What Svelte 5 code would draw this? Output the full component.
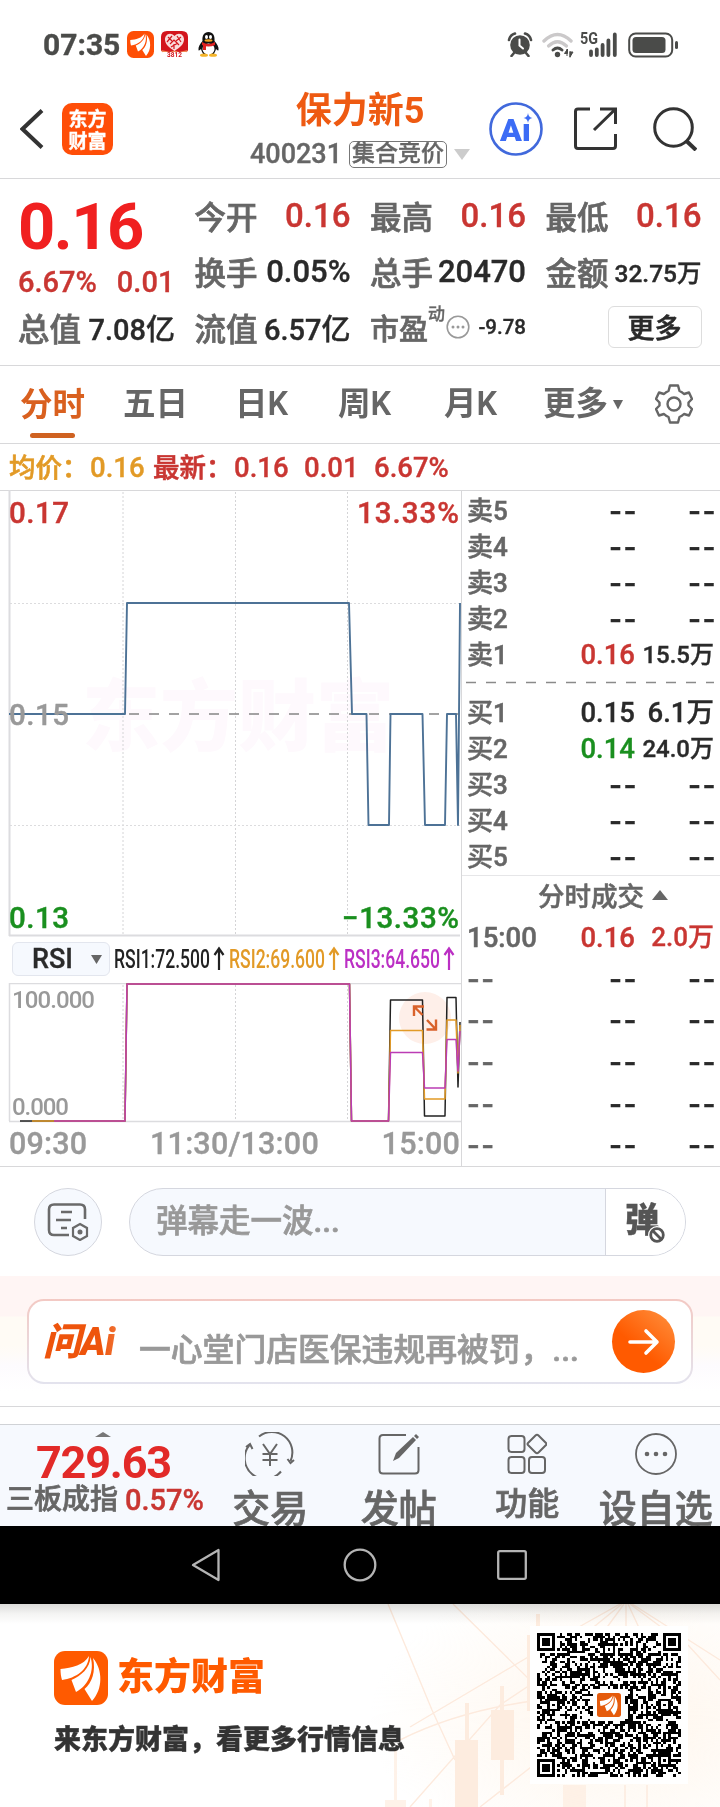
<script lang="ts">
  type Quote = { label: string; value: string; tone?: string; small?: boolean };

  // ── Quote header ──────────────────────────────────────────────────────

  const quotes: Quote[] = [
    { label: "今开", value: "0.16", tone: "up strong" },
    { label: "最高", value: "0.16", tone: "up strong" },
    { label: "最低", value: "0.16", tone: "up strong" },
    { label: "换手", value: "0.05%" },
    { label: "总手", value: "20470" },
    { label: "金额", value: "32.75万", small: true },
  ];

  const tabs = ["分时", "五日", "日K", "周K", "月K"];

  // ── Order book ────────────────────────────────────────────────────────

  const asks = [
    { label: "卖5", price: "--", vol: "--" },
    { label: "卖4", price: "--", vol: "--" },
    { label: "卖3", price: "--", vol: "--" },
    { label: "卖2", price: "--", vol: "--" },
    { label: "卖1", price: "0.16", vol: "15.5万", tone: "up" },
  ];
  const bids = [
    { label: "买1", price: "0.15", vol: "6.1万" },
    { label: "买2", price: "0.14", vol: "24.0万", tone: "down" },
    { label: "买3", price: "--", vol: "--" },
    { label: "买4", price: "--", vol: "--" },
    { label: "买5", price: "--", vol: "--" },
  ];

  // ── Chart data, in plot pixels ────────────────────────────────────────

  const gridX = [123, 235.5, 347.5];
  const pricePath =
    "M9 224H125L127 113H349L352 224H366.5L368.5 335H389L390.5 224H422.5L425 335H445L447 224H456L458 335L460 113";

  function rsiPath(start: number, a: number, b: number, c: number, d: number, e: number) {
    return `M${start} 138H125L127 1H349.5L351.5 138H388.5L390.5 ${a}H422.5L424.5 ${b}H445L447 ${c}H456L458 ${d}L460 ${e}`;
  }

  const rsi = [
    { color: "#222", d: rsiPath(20, 17, 133, 14.5, 104, 39) },
    { color: "#e29a26", d: rsiPath(32, 47.5, 116, 37, 90, 42) },
    { color: "#bb3cb4", d: rsiPath(54, 69.5, 105, 56.5, 88, 48) },
  ];

  // ── QR code ───────────────────────────────────────────────────────────

  const QR = 57;
  const finders = [[0, 0], [QR - 7, 0], [0, QR - 7]];
  const aligns = [[28, 6], [6, 28], [50, 28], [28, 50], [50, 50]];

  function ring(x: number, y: number, size: number) {
    const edge = x === 0 || y === 0 || x === size - 1 || y === size - 1;
    const core = x > 1 && y > 1 && x < size - 2 && y < size - 2;
    return edge || core;
  }

  function isDark(x: number, y: number, noise: number) {
    for (const [fx, fy] of finders) {
      if (x >= fx - 1 && x <= fx + 7 && y >= fy - 1 && y <= fy + 7) {
        const inside = x >= fx && x < fx + 7 && y >= fy && y < fy + 7;
        return inside && ring(x - fx, y - fy, 7);
      }
    }
    for (const [ax, ay] of aligns) {
      if (Math.abs(x - ax) <= 2 && Math.abs(y - ay) <= 2) return ring(x - ax + 2, y - ay + 2, 5);
    }
    if (Math.abs(x - 28) < 7 && Math.abs(y - 28) < 7) return false;
    return noise < 0.52;
  }

  function buildQr() {
    let seed = 20470;
    let d = "";
    for (let y = 0; y < QR; y++) {
      for (let x = 0; x < QR; x++) {
        seed = (seed * 1103515245 + 12345) % 2147483648;
        if (isDark(x, y, seed / 2147483648)) d += `M${x} ${y}h1v1h-1z`;
      }
    }
    return d;
  }

  const qrPath = buildQr();
</script>

{#snippet feathers()}
  <path d="M35 5C30 14 18 17 6.500 18C6.500 22 7 26 8 29C22 27 34 19 35 5Z" />
  <path d="M36.500 6C36 17 27 25 17.500 29L22 41C34 35 41 20 36.500 6Z" />
  <path d="M39 7C42 20 38 32 30.500 38L38 50C49 38 49 19 39 7Z" />
{/snippet}

{#snippet bookRow(row: { label: string; price: string; vol: string; tone?: string })}
  <div class="book-row">
    <span class="side">{row.label}</span>
    <span class="price {row.tone ?? ''}" class:dash={row.price === "--"}>{row.price}</span>
    <span class="vol" class:dash={row.vol === "--"} class:tight={row.vol.length > 4}>{row.vol}</span>
  </div>
{/snippet}

<div class="phone">
  <div class="status">
    <span class="clock">07:35</span>
    <svg class="s-app" viewBox="0 0 54 54" width="27" height="27">
      <rect width="54" height="54" rx="13" fill="#fe4e05" />
      <g fill="#fff">{@render feathers()}</g>
    </svg>
    <svg class="s-red" viewBox="0 0 27 27" width="27" height="27">
      <path d="M6 0H21Q27 0 27 6V20L13.500 25L0 20V6Q0 0 6 0Z" fill="#d3151d" />
      <path d="M0 19L9 21L13.500 19.500L18 21L27 19L25 21.500H2Z" fill="#f08a55" />
      <path d="M2 21H25V27H2Z" fill="#fff" />
      <path d="M13.500 5C9 0 3.500 4 4 9C4.500 14 9 17 13.500 20C18 17 22.500 14 23 9C23.500 4 18 0 13.500 5Z" fill="#f9dcdc" />
      <path d="M7 6L11 10M11 5L6 11M16 5L20 11M20 6L15 10M9 13L13 9L18 14M13 13V18M10 16L17 12" stroke="#d3151d" stroke-width="1.200" fill="none" />
      <text x="13.500" y="26" font-size="6.500" text-anchor="middle" class="promo">3812</text>
    </svg>
    <svg class="s-qq" viewBox="0 0 21 25" width="21" height="25">
      <path d="M10.500 0C6 0 4 3.500 4.500 9C2 12 0 15 .5 18C1 19.500 2 17.500 3 17C3.500 19.500 5 21 5 22H16C16 21 17.500 19.500 18 17C19 17.500 20 19.500 20.500 18C21 15 19 12 16.500 9C17 3.500 15 0 10.500 0Z" fill="#111" />
      <ellipse cx="10.500" cy="17" rx="6" ry="5.500" fill="#fff" />
      <path d="M4 10Q10.500 14 17 10V13Q10.500 16 4 13Z" fill="#e02222" />
      <path d="M5 12L8 14V18H5Z" fill="#e02222" />
      <ellipse cx="8.500" cy="5" rx="1.500" ry="2" fill="#fff" />
      <ellipse cx="12.500" cy="5" rx="1.500" ry="2" fill="#fff" />
      <ellipse cx="10.500" cy="8.500" rx="4" ry="1.200" fill="#f5a623" />
      <ellipse cx="6" cy="23.200" rx="4" ry="1.600" fill="#f5b52a" />
      <ellipse cx="15" cy="23.200" rx="4" ry="1.600" fill="#f5b52a" />
    </svg>
    <div class="s-right">
      <svg viewBox="0 0 26 25" width="26" height="25">
        <circle cx="13" cy="13" r="9.800" fill="#4a4b49" />
        <path d="M2 8Q3 3 8 1.500M24 8Q23 3 18 1.500M7 21L4.500 24M19 21L21.500 24" stroke="#4a4b49" stroke-width="2.600" fill="none" stroke-linecap="round" />
        <path d="M12.500 7.500V13.500L16 16.500" stroke="#fff" stroke-width="2" fill="none" stroke-linecap="round" />
      </svg>
      <svg class="wifi" viewBox="0 0 32 26" width="32" height="26" fill="none">
        <path d="M2 9Q15.500 -4 29 9" stroke="#cbc9ca" stroke-width="3.400" stroke-linecap="round" />
        <path d="M6.500 14Q15.500 5.500 24.500 14" stroke="#cbc9ca" stroke-width="3.200" stroke-linecap="round" />
        <path d="M11 18Q15.500 14 20 18" stroke="#4a4b49" stroke-width="3" stroke-linecap="round" />
        <circle cx="15.500" cy="22.500" r="2.700" fill="#4a4b49" />
        <path d="M25.500 17L22.500 21.500H25.500ZM25 17V24M28 19V25.500M28 25L31 20H28Z" fill="#4a4b49" stroke="#4a4b49" stroke-width="1" />
      </svg>
      <svg class="signal" viewBox="0 0 38 26" width="38" height="26">
        <text x="0" y="12" class="net" textLength="18" lengthAdjust="spacingAndGlyphs">5G</text>
        <path d="M11 23V19.500M16.800 23V17.500M22.600 23V13M28.400 23V8.500M34.800 23V2.500" stroke="#4a4b49" stroke-width="3.800" stroke-linecap="round" />
      </svg>
      <svg viewBox="0 0 51 26" width="51" height="26">
        <rect x="1.200" y="1.500" width="43" height="23" rx="6.500" fill="none" stroke="#4a4b49" stroke-width="2" />
        <rect x="4.500" y="5" width="33" height="16" rx="3.500" fill="#4a4b49" />
        <rect x="47" y="9" width="3" height="8" rx="1.500" fill="#4a4b49" />
      </svg>
    </div>
  </div>

  <header class="titlebar">
    <div class="left">
      <svg viewBox="0 0 24 40" width="24" height="40"><path d="M22 1.500L2.500 20L22 38.500" fill="none" stroke="#333" stroke-width="4" /></svg>
      <div class="badge"><span>东方</span><span>财富</span></div>
    </div>
    <div class="name">
      <h1>保力新5</h1>
      <div class="code">
        <span>400231</span><span class="tag">集合竞价</span>
        <svg viewBox="0 0 16 11" width="16" height="11"><path d="M0 0H16L8 11Z" fill="#ccc" /></svg>
      </div>
    </div>
    <div class="actions">
      <svg viewBox="0 0 54 54" width="54" height="54">
        <circle cx="27" cy="27" r="25.500" fill="none" stroke="#4169dc" stroke-width="2.600" />
        <text x="11" y="38.500" class="ai" textLength="31" lengthAdjust="spacingAndGlyphs">Aı</text>
        <path d="M39 11Q39.500 15.500 43.500 16Q39.500 16.500 39 21Q38.500 16.500 34.500 16Q38.500 15.500 39 11Z" fill="#3c6cf5" />
      </svg>
      <svg viewBox="0 0 43 43" width="43" height="43" fill="none" stroke="#333" stroke-width="3">
        <path d="M16 2H4Q1.500 2 1.500 4.500V39Q1.500 41.500 4 41.500H39Q41.500 41.500 41.500 39V27M26 2H41.500V17M41 2.500L20 23" />
      </svg>
      <svg viewBox="0 0 44 44" width="44" height="44" fill="none" stroke="#333" stroke-width="3">
        <circle cx="20.500" cy="20.500" r="18.800" /><path d="M33.500 34L43 43" stroke-width="4" />
      </svg>
    </div>
  </header>

  <section class="quote">
    <div class="last">
      <strong>0.16</strong>
      <div class="change"><span>6.67%</span><span>0.01</span></div>
    </div>
    {#each quotes as q}
      <div class="cell">
        <span class="label">{q.label}</span>
        <span class="value {q.tone ?? ''}" class:small={q.small}>{q.value}</span>
      </div>
    {/each}
    <div class="cell"><span class="label">总值</span><span class="value cap">7.08亿</span></div>
    <div class="cell"><span class="label">流值</span><span class="value cap">6.57亿</span></div>
    <div class="cell pe">
      <span class="label">市盈</span><sup>动</sup>
      <svg viewBox="0 0 24 24" width="24" height="24">
        <circle cx="12" cy="12" r="10.800" fill="none" stroke="#999" stroke-width="1.600" />
        <g fill="#999"><circle cx="7" cy="12" r="1.500" /><circle cx="12" cy="12" r="1.500" /><circle cx="17" cy="12" r="1.500" /></g>
      </svg>
      <span class="value tiny">-9.78</span>
    </div>
    <div class="cell end"><button class="more">更多</button></div>
  </section>

  <nav class="tabs">
    {#each tabs as tab, i}
      <span class="tab" class:active={i === 0}>{tab}</span>
    {/each}
    <span class="tab">更多<svg viewBox="0 0 10 10" width="10" height="10"><path d="M0 0H10L5 9.500Z" fill="#666" /></svg></span>
    <svg class="gear" viewBox="0 0 38 40" width="38" height="40" fill="none" stroke="#666" stroke-width="2.400" stroke-linejoin="round">
      <path d="M15 1.500H23L24.500 7Q27 8 29 10L34 8.500L37 15L33.500 18.500V21.500L37 25L34 31.500L29 30Q27 32 24.500 33L23 38.500H15L13.500 33Q11 32 9 30L4 31.500L1 25L4.500 21.500V18.500L1 15L4 8.500L9 10Q11 8 13.500 7Z" />
      <circle cx="19" cy="20" r="6.500" />
    </svg>
  </nav>

  <div class="avg">
    <span class="gold">均价：</span><span class="gold n1">0.16</span>
    <span class="n2">最新：</span><span class="n3">0.16</span><span class="n4">0.01</span><span class="n5">6.67%</span>
  </div>

  <main class="market">
    <div class="charts">
      <svg class="price-chart" viewBox="0 0 461 448" width="461" height="448" fill="none">
        <text x="82" y="255" class="watermark" textLength="312">东方财富</text>
        <path d="M9.500 0V446M9 445.500H460" stroke="#dcdcdf" stroke-width="2" />
        {#each gridX as x}
          <path d="M{x} 2V445" stroke="#d4d4d6" stroke-dasharray="2 2" />
        {/each}
        <path d="M10 113.500H460M10 335.500H460" stroke="#dcdcde" stroke-dasharray="2 2" />
        <path d="M129 224H460" stroke="#858585" stroke-width="1.600" stroke-dasharray="10 10" />
        <path d={pricePath} stroke="#4d7296" stroke-width="1.900" stroke-linejoin="round" />
        <g class="axis">
          <text x="9" y="32.500" textLength="60" fill="#c93632" stroke="#c93632">0.17</text>
          <text x="459" y="32.500" textLength="102" text-anchor="end" fill="#c93632" stroke="#c93632">13.33%</text>
          <text x="9" y="245" textLength="60" fill="#999" stroke="#999" dy="-10">0.15</text>
          <text x="9" y="438" textLength="60" fill="#1a8f1f" stroke="#1a8f1f">0.13</text>
          <text x="459" y="438" textLength="117" text-anchor="end" fill="#1a8f1f" stroke="#1a8f1f">−13.33%</text>
        </g>
      </svg>

      <div class="indicator">
        <div class="picker">RSI<svg viewBox="0 0 11 9" width="11" height="9"><path d="M0 0H11L5.500 9Z" fill="#666" /></svg></div>
        <svg viewBox="0 0 346 34" width="346" height="34" class="legend">
          <text x="0" y="25.500" textLength="96" lengthAdjust="spacingAndGlyphs" fill="#222">RSI1:72.500</text>
          <text x="115" y="25.500" textLength="96" lengthAdjust="spacingAndGlyphs" fill="#e29a26">RSI2:69.600</text>
          <text x="230" y="25.500" textLength="96" lengthAdjust="spacingAndGlyphs" fill="#bb2fc4">RSI3:64.650</text>
          <g fill="none" stroke-width="2.200">
            <path d="M105 28V7M100.500 13L105 6.500L109.500 13" stroke="#222" />
            <path d="M220 28V7M215.500 13L220 6.500L224.500 13" stroke="#e29a26" />
            <path d="M335 28V7M330.500 13L335 6.500L339.500 13" stroke="#bb2fc4" />
          </g>
        </svg>
      </div>

      <svg class="rsi-chart" viewBox="0 0 461 140" width="461" height="140" fill="none">
        <circle cx="425" cy="35" r="26" fill="#feefe9" />
        <path d="M9 .5H461M9.500 0V138M9 138.500H461" stroke="#dcdcdf" stroke-width="1.500" />
        {#each gridX as x}
          <path d="M{x} 2V138" stroke="#d4d4d6" stroke-dasharray="2 2" />
        {/each}
        {#each rsi as line}
          <path d={line.d} stroke={line.color} stroke-width="1.500" stroke-linejoin="round" />
        {/each}
        <g class="rsi-axis">
          <text x="12" y="25" textLength="83">100.000</text>
          <text x="12" y="131.500" textLength="57">0.000</text>
        </g>
        <g stroke="#d9622b" stroke-width="2.400">
          <path d="M414 33V23.500H424M414.500 24L422.500 32" />
          <path d="M436 36.500V46.500H426.500M427 37L435.500 46" />
        </g>
      </svg>

      <div class="times"><span>09:30</span><span>11:30/13:00</span><span>15:00</span></div>
    </div>

    <aside class="book">
      <div class="asks">{#each asks as row}{@render bookRow(row)}{/each}</div>
      <svg class="split" viewBox="0 0 258 22" width="258" height="22"><path d="M5 9.500H253" stroke="#8a8a8a" stroke-width="1.600" stroke-dasharray="10 10" /></svg>
      <div class="bids">{#each bids as row}{@render bookRow(row)}{/each}</div>
      <div class="deals-title">分时成交<svg viewBox="0 0 16 10" width="16" height="10"><path d="M8 0L16 10H0Z" fill="#666" /></svg></div>
      <div class="book-row deal first"><span class="side">15:00</span><span class="price up">0.16</span><span class="vol up">2.0万</span></div>
      {#each { length: 5 } as _}
        <div class="book-row deal"><span class="side dash">--</span><span class="price dash">--</span><span class="vol dash">--</span></div>
      {/each}
    </aside>
  </main>

  <section class="danmu">
    <div class="round">
      <svg viewBox="0 0 42 38" width="42" height="38" fill="none" stroke="#6a6a6a" stroke-width="2.600">
        <path d="M22 32H7Q2 32 2 27V6.500Q2 1.500 7 1.500H33Q38 1.500 38 6.500V16" />
        <path d="M14 9H25M9 17H24M14 25H20" />
        <path d="M33 21L40 25V33L33 37L26 33V25Z" stroke-width="2.200" /><circle cx="33" cy="29" r="1.200" />
      </svg>
    </div>
    <div class="pill">
      <span class="hint">弹幕走一波...</span>
      <div class="toggle">
        <span>弹</span>
        <svg class="ban" viewBox="0 0 18 18" width="18" height="18"><circle cx="9" cy="9" r="9" fill="#fff" /><circle cx="9" cy="9" r="6.300" fill="none" stroke="#555" stroke-width="2.800" /><path d="M5 5L13 13" stroke="#555" stroke-width="2.800" /></svg>
      </div>
    </div>
  </section>

  <section class="ask">
    <div class="ask-box">
      <span class="ask-logo">问Ai</span>
      <span class="question">一心堂门店医保违规再被罚，...</span>
      <div class="go"><svg viewBox="0 0 34 28" width="34" height="28" fill="none" stroke="#fff" stroke-width="3.600" stroke-linecap="round" stroke-linejoin="round"><path d="M3 14H30M19 3L30 14L19 25" /></svg></div>
    </div>
  </section>

  <footer class="dock">
    <div class="index">
      <svg viewBox="0 0 16 5" width="16" height="5"><path d="M8 0L16 5H0Z" fill="#777" /></svg>
      <strong>729.63</strong>
      <div><span>三板成指</span><em>0.57%</em></div>
    </div>
    <div class="item big">
      <svg viewBox="0 0 50 44" width="50" height="44" fill="none" stroke="#666" stroke-width="2">
        <path d="M14 4.500A20.500 20.500 0 0 1 45.500 29M36 39.500A20.500 20.500 0 0 1 4.500 13M1 15L5 12L7.500 17M42.500 27L45.500 31L49 28" />
        <path d="M18 12L25 22L32 12M25 22V34M17.500 22H32.500M17.500 28H32.500" />
      </svg>
      <span>交易</span>
    </div>
    <div class="item big">
      <svg viewBox="0 0 42 42" width="42" height="42" fill="none" stroke="#666" stroke-width="2">
        <path d="M28 2H5Q1.500 2 1.500 5.500V37Q1.500 40.500 5 40.500H37Q40.500 40.500 40.500 37V14" />
        <path d="M15 28L18 20L35 4L38 7L21 25Z" fill="#666" stroke="none" /><path d="M36 3L38 1L41 4L39 6Z" fill="#666" stroke="none" />
      </svg>
      <span>发帖</span>
    </div>
    <div class="item">
      <svg viewBox="0 0 40 40" width="40" height="40" fill="none" stroke="#666" stroke-width="2">
        <rect x="1.500" y="2" width="16" height="16" rx="3" /><rect x="1.500" y="23" width="16" height="16" rx="3" /><rect x="22" y="23" width="16" height="16" rx="3" />
        <path d="M28.500 1.500Q30 0 31.500 1.500L39 9Q40 10 39 11L31.500 18.500Q30 20 28.500 18.500L21 11Q20 10 21 9Z" />
      </svg>
      <span>功能</span>
    </div>
    <div class="item big">
      <svg viewBox="0 0 42 42" width="42" height="42"><circle cx="21" cy="21" r="20" fill="none" stroke="#666" stroke-width="1.800" /><g fill="#666"><circle cx="12" cy="21" r="2.300" /><circle cx="21" cy="21" r="2.300" /><circle cx="30" cy="21" r="2.300" /></g></svg>
      <span>设自选</span>
    </div>
  </footer>

  <div class="sysnav">
    <svg viewBox="0 0 30 34" width="30" height="34"><path d="M27.500 2V32L2 17Z" /></svg>
    <svg viewBox="0 0 34 34" width="34" height="34"><circle cx="17" cy="17" r="15.300" /></svg>
    <svg viewBox="0 0 30 30" width="30" height="30"><rect x="1.200" y="1.200" width="27.600" height="27.600" rx="1.500" /></svg>
  </div>

  <section class="brand">
    <svg class="deco" viewBox="370 1604 350 203" width="350" height="203" fill="none">
      <defs><radialGradient id="warm"><stop offset="0" stop-color="#fff6ec" /><stop offset="1" stop-color="#fff6ec" stop-opacity="0" /></radialGradient></defs>
      <ellipse cx="620" cy="1720" rx="250" ry="150" fill="url(#warm)" />
      <g stroke="#fdeadd" stroke-width="1.400">
        <path d="M453 1604L540 1690M388 1604L432 1710L455 1760M410 1727L540 1650M410 1807L500 1705L530 1685M480 1807L540 1760M400 1740Q460 1710 540 1700" />
        <path d="M620 1604L570 1632M622 1604L590 1630M624 1604L605 1630M626 1604V1630M628 1604L640 1630M630 1604L665 1630M632 1604L720 1660M688 1645L720 1680M625 1785V1807M647 1785V1807" />
      </g>
      <g fill="#fdecdf">
        <path d="M455 1740H478V1807H455ZM465 1703H469V1740H465ZM491 1710H514V1760H491ZM500 1686H504V1710H500ZM500 1760H504V1795H500ZM527 1635H530V1711H527ZM536 1614H540V1627H536Z" />
        <path d="M563 1785H586V1807H563ZM385 1800H406V1807H385ZM429 1799H432V1807H429ZM394 1750H397V1800H394Z" opacity=".7" />
      </g>
    </svg>
    <div class="brand-text">
      <div class="brand-name">
        <svg viewBox="0 0 54 54" width="54" height="54"><rect width="54" height="54" rx="11" fill="#ff5a00" /><g fill="#fff">{@render feathers()}</g></svg>
        <span>东方财富</span>
      </div>
      <p>来东方财富，看更多行情信息</p>
    </div>
    <div class="qr">
      <svg viewBox="0 0 57 57" width="144" height="144" shape-rendering="crispEdges"><path d={qrPath} fill="#000" /></svg>
      <svg class="qr-logo" viewBox="0 0 54 54" width="24" height="24"><rect width="54" height="54" rx="6" fill="#e55b0c" /><g fill="#fff">{@render feathers()}</g></svg>
    </div>
  </section>
</div>

<style>
  :global(body) {
    margin: 0;
    background: #fff;
  }

  .phone {
    width: 720px;
    height: 1807px;
    overflow: hidden;
    background: #fff;
    color: #2a2a2a;
    font-family: Roboto, "Noto Sans CJK SC", sans-serif;
    font-weight: 500;
    white-space: nowrap;
    -webkit-text-stroke-width: 0.35px;
  }

  .phone * {
    box-sizing: border-box;
  }

  svg {
    display: block;
    flex: none;
  }

  .up { color: #c93632; }
  .down { color: #1a8f1f; }

  /* status bar */
  .status {
    height: 89px;
    padding: 0 41px 0 43px;
    display: flex;
    align-items: center;
  }

  .clock {
    width: 84px;
    font-size: 30px;
    font-weight: 700;
    color: #4a4b49;
  }

  .s-app { margin-right: 7px; }
  .s-red { margin-right: 10px; }

  .promo {
    fill: #d3151d;
    font-weight: 700;
  }

  .s-right {
    margin-left: auto;
    display: flex;
    align-items: center;
  }

  .wifi { margin: 0 6px 0 9px; }
  .signal { overflow: visible; }
  .s-right svg:last-child { margin-left: 10px; }

  .net {
    font-size: 16px;
    font-weight: 700;
    fill: #4a4b49;
  }

  /* title bar */
  .titlebar {
    height: 90px;
    border-bottom: 1px solid #d8d8da;
    display: grid;
    grid-template-columns: 1fr auto 1fr;
  }

  .left {
    height: 79px;
    padding-left: 20px;
    display: flex;
    align-items: center;
    gap: 18px;
  }

  .badge {
    width: 51px;
    height: 52px;
    border-radius: 10px;
    background: #ff4e08;
    color: #fff;
    font: 700 19px/22px "Noto Sans CJK SC", sans-serif;
    display: flex;
    flex-direction: column;
    align-items: center;
    justify-content: center;
  }

  .name h1 {
    margin: 0;
    font-size: 36px;
    line-height: 45px;
    font-weight: 700;
    text-align: center;
    color: #ee5a12;
    -webkit-text-stroke-width: 0;
  }

  .code {
    height: 40px;
    display: flex;
    align-items: center;
    gap: 7px;
    font-size: 27px;
    color: #666;
  }

  .tag {
    height: 27px;
    padding: 0 2px;
    border: 1.5px solid #777;
    border-radius: 5px;
    font-size: 23px;
    line-height: 23px;
  }

  .actions {
    height: 79px;
    padding-right: 23px;
    display: flex;
    align-items: center;
    justify-content: flex-end;
  }

  .actions svg:nth-child(2) { margin: 0 36px 0 31px; }

  .ai {
    font-size: 32px;
    font-weight: 900;
    fill: #3c6cf5;
  }

  /* quote */
  .quote {
    height: 187px;
    padding: 8px 18px 0 18px;
    border-bottom: 1px solid #d8d8da;
    display: grid;
    grid-template-columns: 157px repeat(3, 156px);
    grid-template-rows: repeat(3, 56px);
    column-gap: 19.500px;
  }

  .last {
    grid-row: span 2;
    padding-top: 2px;
    color: #f02020;
  }

  .last strong {
    display: block;
    font-size: 65px;
    line-height: 76px;
    letter-spacing: -1.500px;
    -webkit-text-stroke-width: 0;
  }

  .change {
    display: flex;
    gap: 20px;
    font-size: 29px;
    line-height: 34px;
    color: #c93632;
  }

  .cell {
    display: flex;
    align-items: center;
    justify-content: space-between;
  }

  .label {
    font-size: 31.500px;
    color: #666;
    -webkit-text-stroke-width: 0.7px;
  }

  .value { font-size: 31px; }
  .value.strong { font-size: 33px; }
  .value.small { font-size: 24.500px; }
  .value.cap { font-size: 29px; }
  .value.tiny { font-size: 20.500px; margin-left: auto; }

  .pe sup {
    align-self: flex-start;
    margin-top: 3px;
    font-size: 17px;
    line-height: 24px;
    color: #666;
  }

  .pe .label { font-size: 29px; }
  .pe svg { margin-left: 1px; }

  .end { justify-content: flex-end; }

  .more {
    width: 94px;
    height: 42px;
    margin-bottom: 1px;
    padding: 0;
    border: 1px solid #ddd;
    border-radius: 6px;
    background: #fff;
    color: #2a2a2a;
    font: 500 27px/38px "Noto Sans CJK SC", sans-serif;
    -webkit-text-stroke-width: 0.6px;
  }

  /* tabs */
  .tabs {
    height: 78px;
    padding-left: 20px;
    border-bottom: 1px solid #d8d8da;
    display: grid;
    grid-template-columns: 103px 112px 103px 106px 99px 112px auto;
    align-items: start;
    -webkit-text-stroke-width: 0;
  }

  .tab {
    height: 77px;
    font-size: 32.500px;
    line-height: 79px;
    color: #666;
    font-weight: 600;
    display: flex;
    align-items: center;
    gap: 5px;
  }

  .tab.active {
    width: 65px;
    flex-direction: column;
    gap: 0;
    color: #d9601f;
    font-weight: 700;
  }

  .tab.active::after {
    content: "";
    width: 45px;
    height: 5px;
    margin-top: -12px;
    border-radius: 3px;
    background: #cf6221;
  }

  .gear { margin-top: 18px; }

  /* average line */
  .avg {
    height: 47px;
    padding-left: 9px;
    border-bottom: 1px solid #d8d8da;
    display: flex;
    font-size: 27.500px;
    line-height: 48px;
    color: #c93632;
  }

  .gold { color: #e29a26; width: 81px; }
  .gold.n1 { width: 63px; }
  .n2 { width: 81px; }
  .n3, .n4 { width: 70px; }

  .gold:not(.n1),
  .n2 {
    font-size: 26.500px;
    -webkit-text-stroke-width: 0.6px;
  }

  /* market */
  .market {
    height: 676px;
    border-bottom: 1px solid #d8d8da;
    display: flex;
  }

  .charts {
    width: 461px;
    margin-top: -1px;
  }

  .watermark {
    font-size: 78px;
    font-weight: 900;
    fill: #fef9fd;
  }

  .axis text {
    font-size: 29.500px;
    font-weight: 500;
    stroke-width: 0.4px;
  }

  .indicator {
    height: 45px;
    padding: 4px 0 0 12px;
    display: flex;
    gap: 4px;
  }

  .picker {
    width: 98px;
    height: 34px;
    padding: 0 7px 0 19px;
    border: 1px solid #e3e6ee;
    border-radius: 6px;
    background: #f6f9fe;
    display: flex;
    align-items: center;
    justify-content: space-between;
    font-size: 27px;
  }

  .legend text {
    font-size: 26px;
    font-weight: 500;
  }

  .rsi-axis text {
    font-size: 24px;
    fill: #999;
    font-weight: 500;
  }

  .times {
    height: 42px;
    padding: 0 1px 0 9px;
    display: flex;
    justify-content: space-between;
    font-size: 30.500px;
    line-height: 42px;
    letter-spacing: 0.2px;
    color: #999;
  }

  /* order book */
  .book {
    flex: 1;
    border-left: 1px solid #d8d8da;
  }

  .asks { padding-top: 2px; }
  .split { margin-left: -1px; }

  .bids {
    height: 180px;
  }

  .book-row {
    height: 36px;
    padding: 0 6px 0 5px;
    display: grid;
    grid-template-columns: 77px 91px 1fr;
    line-height: 36px;
    font-size: 27.500px;
  }

  .book-row span:not(.side) { text-align: right; }

  .side {
    font-size: 26px;
    color: #666;
    -webkit-text-stroke-width: 0.5px;
  }

  .book-row .tight { font-size: 24px; }

  .book-row .dash {
    font-family: Inter, sans-serif;
    font-size: 28px;
    font-weight: 600;
    letter-spacing: 1.500px;
  }

  .book-row .dash:not(.side) { margin-right: -3px; }

  .deals-title {
    height: 42px;
    border-top: 1px solid #e6e6e8;
    display: flex;
    align-items: center;
    justify-content: center;
    gap: 8px;
    padding: 0 0 4px 24px;
    font-size: 26.500px;
    color: #666;
    -webkit-text-stroke-width: 0.5px;
  }

  .deal {
    height: 41.700px;
    line-height: 41px;
  }

  .deal .side { font-size: 27.500px; }
  .deal .vol:not(.dash) { font-size: 26px; }

  .danmu {
    height: 109px;
    padding: 21px 34px 0 34px;
    display: flex;
    gap: 27px;
  }

  .round {
    width: 68px;
    height: 68px;
    border: 1px solid #d5d7df;
    border-radius: 50%;
    background: #f6f9fe;
    display: grid;
    place-items: center;
  }

  .pill {
    width: 557px;
    height: 68px;
    border: 1px solid #d5d7df;
    border-radius: 34px;
    overflow: hidden;
    background: #f6f9fe;
    display: flex;
    justify-content: space-between;
  }

  .hint {
    padding-left: 26px;
    font-size: 31.500px;
    line-height: 66px;
    color: #999;
    -webkit-text-stroke-width: 0.7px;
  }

  .toggle {
    position: relative;
    width: 80px;
    padding-left: 19px;
    border-left: 1px solid #d5d7df;
    background: #fff;
    font-size: 34px;
    line-height: 63px;
    font-weight: 900;
    color: #555;
  }

  .ban {
    position: absolute;
    left: 42px;
    top: 37px;
  }

  /* ask */
  .ask {
    height: 131px;
    padding: 23px 27px 0;
    border-bottom: 1px solid #d8d8da;
    background: linear-gradient(#fff5f4 0 40px, #fffbf5 41px 70px, #fdfbfe 90px, #fff 115px);
  }

  .ask-box {
    height: 85px;
    padding: 0 16px 0 14px;
    border: 2px solid transparent;
    border-radius: 17px;
    background:
      linear-gradient(#fff, #fff) padding-box,
      linear-gradient(#f3c9c3, #e3e3ee) border-box;
    display: flex;
    align-items: center;
  }

  .ask-logo {
    width: 96px;
    font-size: 38px;
    line-height: 40px;
    font-weight: 900;
    font-style: italic;
    letter-spacing: -0.500px;
    background: linear-gradient(90deg, #ee540c 60%, #f39a69);
    background-clip: text;
    -webkit-background-clip: text;
    -webkit-text-stroke-width: 0;
    color: transparent;
  }

  .question {
    padding-top: 16px;
    font-size: 31.800px;
    line-height: 40px;
    color: #999;
    -webkit-text-stroke-width: 0.7px;
  }

  .go {
    width: 63px;
    height: 63px;
    margin-left: auto;
    border-radius: 50%;
    background: linear-gradient(220deg, #ff9240, #ff5a00 60%);
    display: grid;
    place-items: center;
  }

  /* dock */
  .dock {
    height: 102px;
    margin-top: 17px;
    border-top: 1px solid #d0d2d6;
    background: #f6f9fe;
    overflow: hidden;
    display: grid;
    grid-template-columns: 206px repeat(4, 128.500px);
    color: #666;
    -webkit-text-stroke-width: 0.7px;
  }

  .index {
    padding-top: 7px;
  }

  .index svg { margin-left: 95px; }

  .index strong {
    display: block;
    padding-left: 36px;
    font-size: 45px;
    line-height: 51px;
    font-weight: 700;
    letter-spacing: -1.200px;
    color: #e22a28;
    -webkit-text-stroke-width: 0;
  }

  .index div {
    display: flex;
    gap: 7px;
    padding-left: 6px;
    margin-top: -2px;
    font-size: 28px;
    line-height: 28px;
  }

  .index em {
    font-style: normal;
    font-size: 29px;
    color: #c93632;
    -webkit-text-stroke-width: 0.4px;
  }

  .item {
    display: flex;
    flex-direction: column;
    align-items: center;
    height: 104px;
    padding-top: 7px;
    font-size: 32px;
  }

  .item svg { height: 44px; }

  .item span {
    margin-top: 6px;
    line-height: 44px;
  }

  .item.big span {
    font-size: 38px;
    margin-top: 11px;
  }

  .sysnav {
    height: 78px;
    background: #000;
    display: flex;
    align-items: center;
    justify-content: center;
    gap: 122px;
    padding-right: 2px;
    fill: none;
    stroke: #b4b4b4;
    stroke-width: 2.300px;
    stroke-linejoin: round;
  }

  .sysnav svg:last-child { margin-left: -2px; }

  .brand {
    position: relative;
    height: 203px;
    padding: 22px 32px 0 54px;
    background: linear-gradient(#dcdcda, #f4f4f3 10px, #fff 20px);
    display: flex;
    justify-content: space-between;
  }

  .deco {
    position: absolute;
    right: 0;
    top: 0;
    mix-blend-mode: multiply;
  }

  .brand-text { padding-top: 25px; }

  .brand-name {
    display: flex;
    align-items: center;
    gap: 9px;
    color: #ff5a00;
    font-size: 37px;
    font-weight: 900;
    line-height: 54px;
    -webkit-text-stroke-width: 0;
  }

  p {
    margin: 15px 0 0;
    font-size: 27px;
    line-height: 40px;
    font-weight: 900;
    color: #333;
  }

  .qr {
    position: relative;
    width: 158px;
    height: 158px;
    padding: 7px;
    background: #fff;
  }

  .qr-logo {
    position: absolute;
    left: 67px;
    top: 67px;
  }
</style>
